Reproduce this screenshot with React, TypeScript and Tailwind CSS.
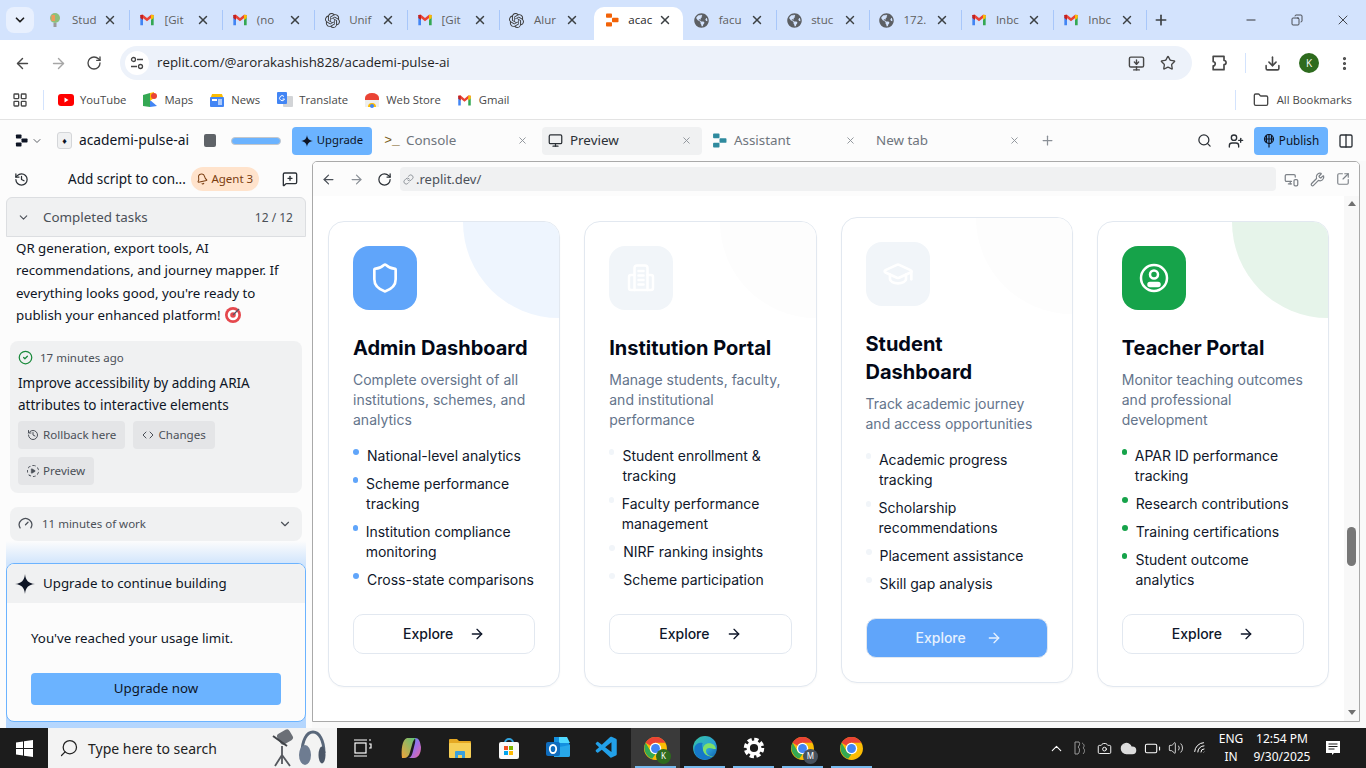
import type { ReactNode } from 'react';
import {
  ArrowLeft,
  ArrowRight,
  Battery,
  Bell,
  Camera,
  ChevronDown,
  ChevronUp,
  CircleCheck,
  Cloud,
  Code,
  Columns2,
  Copy,
  Download,
  EllipsisVertical,
  Folder,
  Gauge,
  GraduationCap,
  History,
  LayoutGrid,
  Link,
  MessageSquarePlus,
  Minus,
  Monitor,
  MonitorDown,
  MonitorSmartphone,
  Play,
  Plus,
  RotateCw,
  Search,
  Shield,
  SquareArrowOutUpRight,
  Star,
  UserPlus,
  Volume2,
  Wifi,
  Wrench,
  X,
} from 'lucide-react';
import { FaGlobeAmericas } from 'react-icons/fa';
import { SiOpenai } from 'react-icons/si';
import { VscVscode } from 'react-icons/vsc';

function GmailIcon({ size = 16 }: { size?: number }) {
  return (
    <svg width={size} height={size} viewBox="0 0 24 24">
      <path d="M2 6v14h4V10z" fill="#4285f4" />
      <path d="M22 6v14h-4V10z" fill="#34a853" />
      <path d="M2 6l10 8 10-8v-1.500L18 4l-6 5-6-5-4 .5z" fill="#ea4335" />
      <path d="M18 4l4 .5V9l-4 3z" fill="#fbbc04" />
      <path d="M2 4.500L6 4v8L2 9z" fill="#c5221f" />
    </svg>
  );
}

function ReplitMark({ color, size = 14 }: { color: string; size?: number }) {
  return (
    <svg width={size} height={size} viewBox="0 0 14 14" fill={color}>
      <rect x="1" y="0.500" width="6" height="4.300" rx="0.800" />
      <rect x="7" y="4.800" width="6.500" height="4.400" rx="0.800" />
      <rect x="1" y="9.200" width="6" height="4.300" rx="0.800" />
    </svg>
  );
}

function ChromeLogo({ size = 24 }: { size?: number }) {
  return (
    <svg width={size} height={size} viewBox="0 0 48 48">
      <circle cx="24" cy="24" r="22" fill="#fbbc04" />
      <path d="M24 2a22 22 0 0 1 19 11H24a11 11 0 0 0-9.500 5.500L5 13A22 22 0 0 1 24 2z" fill="#ea4335" />
      <path d="M5 13l9.500 16.500A11 11 0 0 0 24 35l-6.500 8.500A22 22 0 0 1 5 13z" fill="#34a853" />
      <circle cx="24" cy="24" r="11" fill="#fff" />
      <circle cx="24" cy="24" r="8.500" fill="#4285f4" />
    </svg>
  );
}

function EdgeLogo() {
  return (
    <svg width="26" height="26" viewBox="0 0 48 48">
      <defs>
        <linearGradient id="edgeA" x1="0" y1="0" x2="1" y2="1">
          <stop offset="0" stopColor="#37c6a0" />
          <stop offset="0.600" stopColor="#2a9fd8" />
          <stop offset="1" stopColor="#0c59a4" />
        </linearGradient>
      </defs>
      <circle cx="24" cy="24" r="22" fill="url(#edgeA)" />
      <path d="M44 26c0-7-6-11-12-11-7 0-12 5-12 11 0 8 7 14 15 14 3 0 5-1 7-2-4 2-14 2-16-7-1-4 2-7 6-7 4 0 6 2 12 2z" fill="#7ee06a" />
      <path d="M20 26c0 8 7 14 15 14-4 5-15 7-24 1-6-5-8-13-6-20 3-5 9-8 15-6-3 2-0 8 0 11z" fill="#1678c8" />
    </svg>
  );
}

function BuildingIcon() {
  return (
    <svg width="32" height="32" viewBox="0 0 32 32" fill="none" stroke="#fff" strokeWidth="2.500" strokeLinecap="round" strokeLinejoin="round">
      <path d="M9.500 28V6a2.500 2.500 0 0 1 2.500-2.500h8A2.500 2.500 0 0 1 22.500 6v22" />
      <path d="M9.500 13H6a2 2 0 0 0-2 2v11a2 2 0 0 0 2 2h20a2 2 0 0 0 2-2V15a2 2 0 0 0-2-2h-3.500" />
      <path d="M13.500 9h5M13.500 13.500h5M13.500 18h5M13.500 22.500h5" />
    </svg>
  );
}

function ProfileIcon() {
  return (
    <svg width="32" height="32" viewBox="0 0 32 32" fill="none" stroke="#fff" strokeWidth="2.500" strokeLinecap="round">
      <circle cx="16" cy="16" r="13" />
      <circle cx="16" cy="12.500" r="4" />
      <rect x="10.500" y="21" width="11" height="3" rx="1.500" fill="#fff" />
    </svg>
  );
}

function SiteTune() {
  return (
    <svg width="14" height="14" viewBox="0 0 14 14" fill="none" stroke="#444" strokeWidth="1.300">
      <circle cx="3.500" cy="3.500" r="2" />
      <path d="M7 3.500h6M1 10.500h6" />
      <circle cx="10.500" cy="10.500" r="2" />
    </svg>
  );
}

function ExtensionIcon() {
  return (
    <svg width="20" height="20" viewBox="0 0 24 24" fill="none" stroke="#474747" strokeWidth="2" strokeLinejoin="round">
      <path d="M5 4h13v5a2.500 2.500 0 0 1 0 5v6H5v-4.500a2.500 2.500 0 0 0 0-5z" />
    </svg>
  );
}

function StudioDevices() {
  return (
    <svg width="58" height="38" viewBox="0 0 58 38" fill="none">
      <rect x="9" y="2" width="14" height="12" rx="3" transform="rotate(-30 16 8)" fill="#6b6f76" />
      <path d="M4 7l14 10" stroke="#3f4247" strokeWidth="2" />
      <path d="M13 17v9M13 26l-7 11M13 26l8 11M13 26v9" stroke="#55585e" strokeWidth="1.800" />
      <path d="M33 24c0-13 5-21 11-21s11 8 11 21" stroke="#59677a" strokeWidth="3" />
      <ellipse cx="36" cy="26" rx="6" ry="10" fill="#6e7c91" />
      <ellipse cx="53" cy="26" rx="3.500" ry="8.500" fill="#4b5667" />
    </svg>
  );
}

const tabs = [
  { title: 'Stud', icon: 'bulb', divider: true },
  { title: '[Git', icon: 'gmail', divider: true },
  { title: '(no', icon: 'gmail', divider: true },
  { title: 'Unif', icon: 'openai', divider: true },
  { title: '[Git', icon: 'gmail', divider: true },
  { title: 'Alur', icon: 'openai' },
  { title: 'acac', icon: 'replit', active: true },
  { title: 'facu', icon: 'globe', divider: true },
  { title: 'stuc', icon: 'globe', divider: true },
  { title: '172.', icon: 'globe', divider: true },
  { title: 'Inbc', icon: 'gmail', divider: true },
  { title: 'Inbc', icon: 'gmail', divider: true },
];

function TabIcon({ icon }: { icon: string }) {
  if (icon === 'gmail') return <GmailIcon />;
  if (icon === 'openai') return <SiOpenai size={15} className="text-[#3c3c3c]" />;
  if (icon === 'globe') return <FaGlobeAmericas size={15} className="text-[#5c5f63]" />;
  if (icon === 'replit') return <ReplitMark color="#f26207" />;
  return (
    <svg width="16" height="16" viewBox="0 0 16 16">
      <circle cx="8" cy="6" r="5" fill="#8ebf7a" />
      <path d="M4.500 3h3.500v6H4.500z" fill="#ef9b5a" />
      <rect x="6.500" y="11" width="3" height="4" fill="#9a9a9a" />
    </svg>
  );
}

function BrowserTab({ title, icon, active, divider }: { title: string; icon: string; active?: boolean; divider?: boolean }) {
  return (
    <div
      className={
        active
          ? 'w-[88.400px] mx-[2px] h-[33px] pb-[7px] flex items-center pl-[10px] pr-[11px] bg-white rounded-t-[10px]'
          : 'w-[92.400px] h-[33px] pb-[7px] flex items-center pl-[9px]'
      }
    >
      <div className="w-[16px] flex justify-center shrink-0">
        <TabIcon icon={icon} />
      </div>
      <span className={active ? 'ml-[8px] whitespace-nowrap text-[11.500px] text-[#1f1f1f]' : 'ml-[9px] whitespace-nowrap text-[11.500px] text-[#5f5f5f]'}>
        {title}
      </span>
      <X size={14} strokeWidth={2.500} className="ml-auto text-[#3c4043]" />
      {!active && <div className={divider ? 'ml-[12px] w-px h-[20px] bg-[#a8c7fa]' : 'ml-[13px] w-0'} />}
    </div>
  );
}

function TabStrip() {
  return (
    <div className="h-[40px] bg-[#d3e3fd] flex items-center pl-[6px]">
      <div className="w-[28px] h-[26px] rounded-lg bg-[#e8f0fe] flex items-center justify-center mr-[4px]">
        <ChevronDown size={14} strokeWidth={3} className="text-[#1f1f1f]" />
      </div>
      <div className="flex h-full items-end">
        {tabs.map((tab, i) => (
          <BrowserTab key={i} title={tab.title} icon={tab.icon} active={tab.active} divider={tab.divider} />
        ))}
      </div>
      <Plus size={16} strokeWidth={2.500} className="ml-[6px] text-[#3c4043]" />
      <div className="ml-auto flex items-center text-[#1f1f1f]">
        <div className="w-[46px] flex justify-center"><Minus size={14} strokeWidth={1.500} /></div>
        <div className="w-[46px] flex justify-center"><Copy size={12} strokeWidth={1.500} className="-scale-x-100" /></div>
        <div className="w-[46px] flex justify-center"><X size={16} strokeWidth={1.200} /></div>
      </div>
    </div>
  );
}

function Toolbar() {
  return (
    <div className="h-[46px] bg-white rounded-t-lg flex items-center pl-[14px] pr-[12px] text-[#474747]">
      <ArrowLeft size={17} />
      <ArrowRight size={17} className="ml-[19px] text-[#a6a6a6]" />
      <RotateCw size={16} className="ml-[19px]" />
      <div className="ml-[18px] w-[1072px] h-[34px] rounded-full bg-[#edf2fa] flex items-center pl-[5px] pr-[16px]">
        <div className="w-[24px] h-[24px] rounded-full bg-white flex items-center justify-center"><SiteTune /></div>
        <span className="ml-[8px] text-[13.300px] text-[#1f1f1f]">replit.com/@arorakashish828/academi-pulse-ai</span>
        <MonitorDown size={17} className="ml-auto" />
        <Star size={16} className="ml-[15px]" />
      </div>
      <div className="ml-[17px]"><ExtensionIcon /></div>
      <div className="ml-[16px] w-px h-[20px] bg-[#d3e3fd]" />
      <Download size={17} strokeWidth={2.200} className="ml-[18px]" />
      <div className="ml-[18px] w-[20px] h-[20px] rounded-full bg-[#2e6b1e] flex items-center justify-center text-[10px] text-white">K</div>
      <EllipsisVertical size={17} strokeWidth={2.500} className="ml-[17px]" />
    </div>
  );
}

function Bookmark({ icon, label, className }: { icon: ReactNode; label: string; className: string }) {
  return (
    <div className={'flex items-center ' + className}>
      <div className="w-[16px] flex justify-center">{icon}</div>
      <span className="ml-[6px] text-[11.300px] text-[#474747]">{label}</span>
    </div>
  );
}

function BookmarksBar() {
  return (
    <div className="h-[34px] pb-[5px] bg-white flex items-center pl-[12px] pr-[14px] border-b border-[#e3e3e3]">
      <LayoutGrid size={16} className="text-[#474747]" />
      <div className="ml-[15px] w-px h-[20px] bg-[#d3e3fd]" />
      <Bookmark
        className="ml-[14px]"
        label="YouTube"
        icon={
          <svg width="16" height="12" viewBox="0 0 16 12">
            <rect width="16" height="12" rx="3" fill="#f00" />
            <path d="M6.500 3.500v5L10.500 6z" fill="#fff" />
          </svg>
        }
      />
      <Bookmark
        className="ml-[16px]"
        label="Maps"
        icon={
          <svg width="16" height="16" viewBox="0 0 16 16">
            <path d="M1 3l7-2v14l-7-1z" fill="#34a853" />
            <path d="M8 8l7 6-7 1z" fill="#4285f4" />
            <path d="M8 1l4-1v6l-4 3z" fill="#fbbc04" />
            <circle cx="12" cy="4" r="3" fill="#ea4335" />
          </svg>
        }
      />
      <Bookmark
        className="ml-[16px]"
        label="News"
        icon={
          <svg width="16" height="15" viewBox="0 0 16 15">
            <path d="M3 1h10l1 3H2z" fill="#fbbc04" />
            <rect x="1" y="4" width="14" height="10" rx="1" fill="#4285f4" />
            <rect x="3" y="6" width="5" height="2" fill="#fff" />
            <rect x="9" y="6" width="4" height="6" fill="#aecbfa" />
          </svg>
        }
      />
      <Bookmark
        className="ml-[17px]"
        label="Translate"
        icon={
          <svg width="16" height="16" viewBox="0 0 16 16">
            <rect x="6" y="4" width="10" height="11" rx="1" fill="#d2d4d7" />
            <rect x="0" y="0" width="10" height="12" rx="1" fill="#4285f4" />
            <path d="M7 4.500a2.500 2.500 0 1 0 .5 2.500H5.500" fill="none" stroke="#fff" />
          </svg>
        }
      />
      <Bookmark
        className="ml-[16px]"
        label="Web Store"
        icon={
          <svg width="16" height="15" viewBox="0 0 16 15">
            <path d="M1 5a7 5 0 0 1 14 0v2H1z" fill="#ea4335" />
            <path d="M1 7h14v7H1z" fill="#eee" />
            <path d="M4 14a4 4 0 0 1 8 0z" fill="#fbbc04" />
            <circle cx="8" cy="13" r="2" fill="#4285f4" />
          </svg>
        }
      />
      <Bookmark className="ml-[16px]" label="Gmail" icon={<GmailIcon size={15} />} />
      <div className="ml-auto w-px h-[20px] bg-[#d3e3fd]" />
      <Folder size={16} className="ml-[17px] text-[#474747]" />
      <span className="ml-[8px] text-[11.300px] text-[#474747]">All Bookmarks</span>
    </div>
  );
}

function WorkspaceTab({ icon, label, active }: { icon: ReactNode; label: string; active?: boolean }) {
  return (
    <div className={'w-[160px] h-[28px] rounded flex items-center pl-[6px] pr-[10px] mr-[4px]' + (active ? ' bg-[#f0f1f2]' : '')}>
      <div className="w-[16px] flex justify-center shrink-0">{icon}</div>
      <span className={active ? 'ml-[6px] text-[13.400px] text-[#2b3036]' : 'ml-[6px] text-[13.400px] text-[#6f757d]'}>{label}</span>
      <X size={11} className="ml-auto text-[#8b9097]" />
    </div>
  );
}

function ReplitHeader() {
  return (
    <div className="h-[41px] bg-[#fcfcfc] flex items-center pl-[15px] pr-[12px] font-['Noto_Sans',sans-serif] text-[#0e1525]">
      <ReplitMark color="#0e1525" size={13} />
      <ChevronDown size={12} className="ml-[3px] text-[#5c6066]" />
      <div className="ml-[14px] w-[15px] h-[17px] rounded-[3px] border border-[#d4d6d9] bg-[#f0f1f2] flex items-center justify-center text-[9px] leading-none">♦</div>
      <span className="ml-[7px] text-[13.800px]">academi-pulse-ai</span>
      <div className="ml-[15px] w-[12px] h-[13px] rounded-[2px] bg-[#5f6368]" />
      <div className="ml-[15px] w-[50px] h-[8px] rounded-full bg-[#6bb3ff] border border-[#c4c7cb]" />
      <div className="ml-[11px] mr-[6px] w-[80px] h-[28px] rounded bg-[#6bb3ff] flex items-center justify-center">
        <svg width="12" height="12" viewBox="0 0 12 12"><path d="M6 0c.4 3.500 2 5.500 6 6-4 .5-5.600 2.500-6 6-.4-3.500-2-5.500-6-6 4-.5 5.600-2.500 6-6z" fill="#0e1525" /></svg>
        <span className="ml-[4px] text-[11.300px]">Upgrade</span>
      </div>
      <WorkspaceTab
        label="Console"
        icon={<span className="font-['Liberation_Mono',monospace] text-[13px] text-[#7a5b16]">&gt;_</span>}
      />
      <WorkspaceTab active label="Preview" icon={<Monitor size={15} className="text-[#2b3036]" />} />
      <WorkspaceTab label="Assistant" icon={<ReplitMark color="#2f8a9e" size={15} />} />
      <div className="w-[160px] h-[28px] flex items-center pl-[6px] pr-[10px]">
        <span className="text-[13.400px] text-[#6f757d]">New tab</span>
        <X size={11} className="ml-auto text-[#8b9097]" />
      </div>
      <Plus size={15} className="ml-[10px] text-[#8b9097]" />
      <Search size={15} className="ml-auto text-[#2b3036]" />
      <UserPlus size={16} className="ml-[16px] text-[#2b3036]" />
      <div className="ml-[10px] w-[74px] h-[28px] rounded bg-[#6bb3ff] flex items-center justify-center">
        <svg width="12" height="14" viewBox="0 0 12 14" fill="none" stroke="#0e1525" strokeWidth="1.200"><circle cx="6" cy="5" r="4.500" /><path d="M1.500 5h9M6 .5v13M3.500 1.500v7M8.500 1.500v7" /></svg>
        <span className="ml-[4px] text-[11.700px]">Publish</span>
      </div>
      <Columns2 size={16} className="ml-[10px] text-[#2b3036]" />
    </div>
  );
}

function ActionChip({ icon, label }: { icon: ReactNode; label: string }) {
  return (
    <div className="h-[28px] px-[9px] rounded bg-[#e4e5e7] flex items-center text-[11.600px] text-[#4b5058]">
      {icon}
      <span className="ml-[4px]">{label}</span>
    </div>
  );
}

function AgentPanel() {
  return (
    <div className="w-[312px] shrink-0 flex flex-col bg-[#fcfcfc] font-['Noto_Sans',sans-serif] text-[#0e1525]">
      <div className="h-[36px] flex items-center pl-[14px] pr-[14px] shrink-0">
        <History size={15} className="text-[#2b3036]" />
        <span className="ml-[39px] text-[13.500px] whitespace-nowrap">Add script to con...</span>
        <div className="ml-[5px] w-[68px] h-[24px] rounded-full bg-[#ffe3cc] flex items-center justify-center text-[#7a3d10]">
          <Bell size={12} className="-rotate-12" />
          <span className="ml-[3px] text-[11.500px]">Agent 3</span>
        </div>
        <MessageSquarePlus size={16} className="ml-auto text-[#2b3036]" />
      </div>
      <div className="mx-[6px] h-[40px] pt-[1px] shrink-0 rounded-t-md border border-[#dcdee1] bg-[#f0f1f2] flex items-center pl-[10px] pr-[12px] text-[#4b5058]">
        <ChevronDown size={13} />
        <span className="ml-[13px] text-[13.400px]">Completed tasks</span>
        <span className="ml-auto text-[12px]">12 / 12</span>
      </div>
      <div className="flex-1 min-h-0 overflow-hidden">
        <p className="px-[16px] text-[13.300px] leading-[22.400px]">
          QR generation, export tools, AI recommendations, and journey mapper. If everything looks good, you're ready to publish your enhanced platform!{' '}
          <svg width="18" height="18" viewBox="0 0 18 18" className="inline -mt-[3px]">
            <circle cx="9" cy="9" r="8" fill="#e5484d" />
            <circle cx="9" cy="9" r="5.300" fill="#fff" />
            <circle cx="9" cy="9" r="2.800" fill="#e5484d" />
            <path d="M9 9l6-6" stroke="#556" strokeWidth="1.300" />
          </svg>
        </p>
        <div className="mx-[10px] mt-[14px] p-[8px] h-[152px] rounded-lg bg-[#f0f1f2]">
          <div className="flex items-center">
            <CircleCheck size={15} className="text-[#1a8a3c]" />
            <span className="ml-[7px] text-[11.500px] text-[#4b5058]">17 minutes ago</span>
          </div>
          <p className="mt-[6px] text-[13.500px] leading-[22px]">Improve accessibility by adding ARIA attributes to interactive elements</p>
          <div className="mt-[5px] flex flex-wrap gap-x-[8px] gap-y-[8px]">
            <ActionChip icon={<History size={12} />} label="Rollback here" />
            <ActionChip icon={<Code size={12} />} label="Changes" />
            <ActionChip
              icon={
                <span className="w-[12px] h-[12px] rounded-full border border-dashed border-[#4b5058] flex items-center justify-center">
                  <Play size={6} fill="#4b5058" />
                </span>
              }
              label="Preview"
            />
          </div>
        </div>
        <div className="mx-[10px] mt-[14px] h-[34px] rounded-lg bg-[#f0f1f2] flex items-center pl-[8px] pr-[10px] text-[#4b5058]">
          <Gauge size={15} />
          <span className="ml-[9px] text-[11.500px]">11 minutes of work</span>
          <ChevronDown size={14} className="ml-auto" />
        </div>
      </div>
      <div className="mx-[6px] pt-[22px] pb-[6px] shrink-0 bg-[linear-gradient(to_bottom,#fcfcfc_0px,#d3e6fc_22px,#b4d6fe_100%)]">
        <div className="h-[159px] rounded-lg border border-[#6bb3ff] bg-[#fcfcfc] overflow-hidden">
          <div className="h-[39px] bg-[#f0f1f2] flex items-center pl-[8px]">
            <svg width="20" height="20" viewBox="0 0 20 20"><path d="M10 0c.6 6.500 3.500 9.400 10 10-6.500.6-9.400 3.500-10 10-.6-6.500-3.500-9.400-10-10 6.500-.6 9.400-3.500 10-10z" fill="#0e1525" /></svg>
            <span className="ml-[8px] text-[13.300px]">Upgrade to continue building</span>
          </div>
          <p className="mt-[25px] ml-[24px] text-[13.300px] leading-[20px]">You've reached your usage limit.</p>
          <div className="mt-[25px] mx-[24px] h-[32px] rounded-sm bg-[#6bb3ff] flex items-center justify-center text-[13.300px]">Upgrade now</div>
        </div>
      </div>
    </div>
  );
}

type Portal = {
  title: string;
  description: string;
  features: string[];
  icon: ReactNode;
  iconClass: string;
  blobClass: string;
  dotClass: string;
  hovered?: boolean;
};

const portals: Portal[] = [
  {
    title: 'Admin Dashboard',
    description: 'Complete oversight of all institutions, schemes, and analytics',
    features: ['National-level analytics', 'Scheme performance tracking', 'Institution compliance monitoring', 'Cross-state comparisons'],
    icon: <Shield size={32} className="text-white" strokeWidth={2} />,
    iconClass: 'bg-[#60a5fa]',
    blobClass: 'bg-[#eef5fe]',
    dotClass: 'bg-[#60a5fa]',
  },
  {
    title: 'Institution Portal',
    description: 'Manage students, faculty, and institutional performance',
    features: ['Student enrollment & tracking', 'Faculty performance management', 'NIRF ranking insights', 'Scheme participation'],
    icon: <BuildingIcon />,
    iconClass: 'bg-[#f1f5f9]',
    blobClass: 'bg-[#fdfdfd]',
    dotClass: 'bg-[#f1f5f9]',
  },
  {
    title: 'Student Dashboard',
    description: 'Track academic journey and access opportunities',
    features: ['Academic progress tracking', 'Scholarship recommendations', 'Placement assistance', 'Skill gap analysis'],
    icon: <GraduationCap size={32} className="text-white" strokeWidth={2} />,
    iconClass: 'bg-[#f1f5f9]',
    blobClass: 'bg-[#fdfdfd]',
    dotClass: 'bg-[#f1f5f9]',
    hovered: true,
  },
  {
    title: 'Teacher Portal',
    description: 'Monitor teaching outcomes and professional development',
    features: ['APAR ID performance tracking', 'Research contributions', 'Training certifications', 'Student outcome analytics'],
    icon: <ProfileIcon />,
    iconClass: 'bg-[#16a34a]',
    blobClass: 'bg-[#e6f4ea]',
    dotClass: 'bg-[#16a34a]',
  },
];

function PortalCard({ portal }: { portal: Portal }) {
  return (
    <div className={'relative overflow-hidden rounded-2xl border border-[#e2e8f0] bg-white p-[24px] shadow-[0_1px_2px_rgba(0,0,0,0.03)]' + (portal.hovered ? ' -translate-y-1' : '')}>
      <div className={'absolute top-0 right-0 w-[96px] h-[96px] rounded-bl-full ' + portal.blobClass} />
      <div className={'relative w-[64px] h-[64px] rounded-2xl flex items-center justify-center mb-[24px] ' + portal.iconClass}>{portal.icon}</div>
      <h3 className="text-[20px] leading-[28px] font-bold text-[#020817] mb-[8px]">{portal.title}</h3>
      <p className="text-[14px] leading-[20px] text-[#64748b] mb-[16px]">{portal.description}</p>
      <ul className="flex flex-col gap-[8px] mb-[24px]">
        {portal.features.map((feature) => (
          <li key={feature} className="flex items-start text-[14px] leading-[20px] text-[#0f172a]">
            <span className={'w-[6px] h-[6px] rounded-full mt-[3px] mr-[8px] ' + portal.dotClass} />
            <span>{feature}</span>
          </li>
        ))}
      </ul>
      <div
        className={
          portal.hovered
            ? 'h-[40px] pb-[1px] rounded-[10px] bg-[#60a5fa] flex items-center justify-center text-[14px] font-medium text-[#e6f1fe] border border-[#e2e8f0]'
            : 'h-[40px] pb-[1px] rounded-[10px] bg-white flex items-center justify-center text-[14px] font-medium text-[#0f172a] border border-[#e2e8f0]'
        }
      >
        Explore
        <ArrowRight size={16} className={portal.hovered ? 'ml-[16px] translate-x-1' : 'ml-[16px]'} />
      </div>
    </div>
  );
}

function PreviewPane() {
  return (
    <div className="flex-1 min-w-0 pr-[6px] pb-[6px] bg-[#f9f9f9]">
      <div className="h-full rounded-t-[5px] border border-[#a9a9a9] bg-white flex flex-col overflow-hidden">
        <div className="h-[34px] shrink-0 bg-[#fcfcfc] flex items-center pl-[8px] pr-[7px] text-[#5f6368] font-['Noto_Sans',sans-serif]">
          <ArrowLeft size={15} className="text-[#4b5058]" />
          <ArrowRight size={15} className="ml-[13px] text-[#8b9097]" />
          <RotateCw size={15} className="ml-[13px] text-[#2b3036]" />
          <div className="ml-[8px] w-[876px] h-[24px] rounded bg-[#f0f1f2] flex items-center pl-[3px] pt-[1px]">
            <Link size={11} className="text-[#8b9097]" />
            <span className="ml-[2px] text-[13px] text-[#4b5058]">.replit.dev/</span>
          </div>
          <MonitorSmartphone size={15} className="ml-[8px] text-[#7d8288]" />
          <Wrench size={15} className="ml-[11px] text-[#7d8288]" />
          <SquareArrowOutUpRight size={14} className="ml-[11px] text-[#7d8288]" />
        </div>
        <div className="flex-1 min-h-0 flex font-['Inter',sans-serif]">
          <div className="flex-1 min-w-0 pt-[25px] pl-[15px] pr-[15px]">
            <div className="grid grid-cols-4 gap-[24px]">
              {portals.map((portal) => (
                <PortalCard key={portal.title} portal={portal} />
              ))}
            </div>
          </div>
          <div className="w-[15px] shrink-0 bg-[#f8f8f8] flex flex-col items-center pt-[5px] pb-[6px]">
            <div className="w-0 h-0 border-x-[4px] border-x-transparent border-b-[5px] border-b-[#6f6f6f]" />
            <div className="mt-[321px] w-[9px] h-[39px] rounded-full bg-[#777]" />
            <div className="mt-auto w-0 h-0 border-x-[4px] border-x-transparent border-t-[5px] border-t-[#6f6f6f]" />
          </div>
        </div>
      </div>
    </div>
  );
}

function TaskSlot({ children, active, running }: { children: ReactNode; active?: boolean; running?: boolean }) {
  return (
    <div className={'relative w-[49px] h-full flex items-center justify-center' + (active ? ' bg-[#3a3a3a]' : '')}>
      {children}
      {running && <span className="absolute bottom-0 left-[4px] right-[4px] h-[2px] bg-[#76b9ed]" />}
    </div>
  );
}

function BadgedChrome({ letter, color }: { letter: string; color: string }) {
  return (
    <div className="relative">
      <ChromeLogo size={25} />
      <span className={'absolute -right-[3px] -bottom-[3px] w-[15px] h-[15px] rounded-full flex items-center justify-center text-[8px] text-white ' + color}>{letter}</span>
    </div>
  );
}

function TrayIcon({ children }: { children: ReactNode }) {
  return <div className="w-[24px] flex justify-center">{children}</div>;
}

function Taskbar() {
  return (
    <div className="h-[40px] shrink-0 bg-[#1c1c1c] flex items-center font-['Noto_Sans',sans-serif]">
      <div className="w-[48px] flex justify-center">
        <svg width="17" height="17" viewBox="0 0 17 17" fill="#fff">
          <path d="M0 2.400l7-1v6.600H0zM8 1.200L17 0v8H8zM0 9h7v6.600l-7-1zM8 9h9v8l-9-1.200z" />
        </svg>
      </div>
      <div className="w-[289px] h-full bg-[#f3f3f3] flex items-center pl-[11px] pr-[10px]">
        <Search size={20} strokeWidth={1.500} className="text-[#222] -scale-x-100" />
        <span className="ml-[9px] text-[14px] text-[#222]">Type here to search</span>
        <div className="ml-auto"><StudioDevices /></div>
      </div>
      <div className="h-full flex">
        <TaskSlot>
          <svg width="20" height="20" viewBox="0 0 20 20" fill="none" stroke="#fff" strokeWidth="1.200">
            <rect x="3" y="5" width="11" height="10" />
            <path d="M2 2h13M2 18h13M17 2h2M17 6h2v4h-2" />
          </svg>
        </TaskSlot>
        <TaskSlot>
          <svg width="24" height="24" viewBox="0 0 24 24">
            <defs>
              <linearGradient id="copA" x1="0" y1="0" x2="1" y2="1">
                <stop offset="0" stopColor="#3bb5e8" />
                <stop offset="0.500" stopColor="#9c6ee8" />
                <stop offset="1" stopColor="#f0699b" />
              </linearGradient>
              <linearGradient id="copB" x1="0" y1="1" x2="1" y2="0">
                <stop offset="0" stopColor="#f2a33a" />
                <stop offset="1" stopColor="#57c27a" />
              </linearGradient>
            </defs>
            <path d="M8 2h9c-2 1-3 3-4 7l-2 7c-1 4-3 6-6 6H3C2 14 3 4 8 2z" fill="url(#copB)" />
            <path d="M16 2c4 0 5 3 6 9 0 7-3 11-7 11H9c3 0 4-3 5-7l2-8c.4-2 .4-4 0-5z" fill="url(#copA)" />
          </svg>
        </TaskSlot>
        <TaskSlot>
          <svg width="24" height="22" viewBox="0 0 24 22">
            <path d="M1 3a1 1 0 0 1 1-1h7l2 2h11a1 1 0 0 1 1 1v3H1z" fill="#e5a823" />
            <rect x="1" y="6" width="22" height="15" rx="1" fill="#f6cf57" />
            <path d="M7 21v-6a1 1 0 0 1 1-1h8a1 1 0 0 1 1 1v6h-3v-3h-4v3z" fill="#3aa0dd" />
          </svg>
        </TaskSlot>
        <TaskSlot>
          <svg width="24" height="24" viewBox="0 0 24 24">
            <path d="M8 7a4 4 0 0 1 8 0" fill="none" stroke="#32a5e0" strokeWidth="2" />
            <rect x="2" y="6" width="20" height="17" rx="2" fill="#fafafa" />
            <rect x="7" y="10" width="4" height="4" fill="#f25022" />
            <rect x="12" y="10" width="4" height="4" fill="#7fba00" />
            <rect x="7" y="15" width="4" height="4" fill="#00a4ef" />
            <rect x="12" y="15" width="4" height="4" fill="#ffb900" />
          </svg>
        </TaskSlot>
        <TaskSlot>
          <svg width="26" height="26" viewBox="0 0 26 26">
            <path d="M9 2h12l4 8v10a2 2 0 0 1-2 2H9z" fill="#1490df" />
            <path d="M14 2h8l3 6H14z" fill="#50d9ff" />
            <path d="M9 13l16-3v10a2 2 0 0 1-2 2H9z" fill="#28a8ea" />
            <rect x="1" y="7" width="14" height="14" rx="2" fill="#0f6cbd" />
            <ellipse cx="8" cy="14" rx="3.200" ry="4" fill="none" stroke="#fff" strokeWidth="1.800" />
          </svg>
        </TaskSlot>
        <TaskSlot><VscVscode size={26} className="text-[#22a0e8]" /></TaskSlot>
        <TaskSlot active running><BadgedChrome letter="K" color="bg-[#2e6b1e]" /></TaskSlot>
        <TaskSlot running><EdgeLogo /></TaskSlot>
        <TaskSlot running>
          <svg width="22" height="22" viewBox="0 0 22 22" fill="none" stroke="#fff">
            <circle cx="11" cy="11" r="8.500" strokeWidth="3.500" strokeDasharray="4.200 2.470" />
            <circle cx="11" cy="11" r="5.800" strokeWidth="3.400" />
          </svg>
        </TaskSlot>
        <TaskSlot running><BadgedChrome letter="M" color="bg-[#48525e]" /></TaskSlot>
        <TaskSlot running><ChromeLogo size={25} /></TaskSlot>
      </div>
      <div className="ml-auto flex items-center h-full text-white pr-[14px]">
        <TrayIcon><ChevronUp size={17} strokeWidth={1.500} /></TrayIcon>
        <TrayIcon>
          <svg width="12" height="14" viewBox="0 0 12 14" fill="none" stroke="#9a9a9a" strokeWidth="1">
            <path d="M1 1h4c1.500 2 0 4-1 5 2 1 2 5 0 7H1zM8 2c2 1 3 3 1 5 2 1 2 4 0 6" />
          </svg>
        </TrayIcon>
        <TrayIcon><Camera size={15} strokeWidth={1.500} /></TrayIcon>
        <TrayIcon><Cloud size={17} fill="#ddd" className="text-[#ddd]" /></TrayIcon>
        <TrayIcon><Battery size={17} strokeWidth={1.500} fill="#1c1c1c" /></TrayIcon>
        <TrayIcon><Volume2 size={16} strokeWidth={1.200} /></TrayIcon>
        <TrayIcon><Wifi size={15} strokeWidth={1.500} className="-rotate-45" /></TrayIcon>
        <div className="w-[38px] flex flex-col items-center text-[12px] leading-[18px]">
          <span>ENG</span>
          <span>IN</span>
        </div>
        <div className="w-[64px] flex flex-col items-center text-[12px] leading-[18px]">
          <span>12:54 PM</span>
          <span>9/30/2025</span>
        </div>
        <div className="w-[38px] flex justify-center">
          <svg width="16" height="16" viewBox="0 0 16 16">
            <path d="M1 1h14v12H9l-2 2v-2H1z" fill="#fff" />
            <path d="M3.500 4h9M3.500 6.500h9M3.500 9h6" stroke="#1c1c1c" />
          </svg>
        </div>
      </div>
    </div>
  );
}

export default function App() {
  return (
    <div className="w-screen h-screen overflow-hidden flex flex-col bg-white font-['Open_Sans',sans-serif]">
      <TabStrip />
      <Toolbar />
      <BookmarksBar />
      <ReplitHeader />
      <div className="flex-1 min-h-0 flex">
        <AgentPanel />
        <PreviewPane />
      </div>
      <Taskbar />
    </div>
  );
}
